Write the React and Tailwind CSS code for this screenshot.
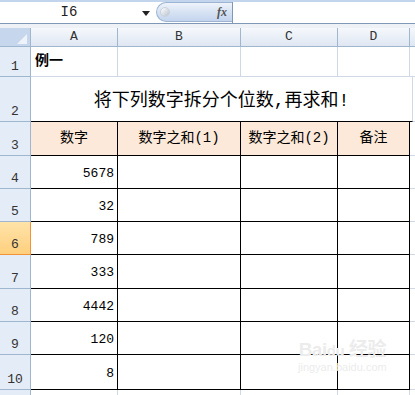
const MONO = { fontFamily: '"Liberation Mono", "Noto Sans CJK SC", monospace' };

const cols = [
  { key: "A", w: "w-[87px]" },
  { key: "B", w: "w-[123px]" },
  { key: "C", w: "w-[97px]" },
  { key: "D", w: "w-[72px]" },
];

const data = [
  { n: 4, h: "h-[33px]", v: "5678" },
  { n: 5, h: "h-[33px]", v: "32" },
  { n: 6, h: "h-[33px]", v: "789", active: true },
  { n: 7, h: "h-[34px]", v: "333" },
  { n: 8, h: "h-[33px]", v: "4442" },
  { n: 9, h: "h-[33px]", v: "120" },
  { n: 10, h: "h-[35px]", v: "8" },
];

const RowHead = ({ n, active }) => (
  <div
    className={
      "w-[31px] shrink-0 flex items-end justify-center pb-[1px] text-[13px] leading-none border-r border-b " +
      (active
        ? "bg-gradient-to-b from-[#ffe3a8] to-[#ffcf7e] border-[#f29436] text-[#333]"
        : "bg-[#e4ecf7] border-[#9eb6ce] text-[#333]")
    }
  >
    <span className="mb-[2px]">{n}</span>
  </div>
);

const FormulaBar = () => (
  <div className="h-[28px] bg-[#eef2f7]">
    <div className="h-[24px] flex border-t-2 border-t-[#c3d5ec] border-b border-b-[#7f98b8] bg-white">
      <div className="w-[156px] shrink-0 flex items-center relative">
        <span className="w-[138px] text-center text-[14px] text-[#222]">I6</span>
        <svg width="8" height="5" className="absolute left-[142px] top-[9px]">
          <path d="M0 0 L8 0 L4 5 Z" fill="#222" />
        </svg>
      </div>
      <div className="w-[76px] shrink-0 h-[20px] rounded-l-full bg-gradient-to-b from-[#eef3fa] via-[#d7e3f3] to-[#c3d5ee] border border-r-0 border-[#9db3d2] flex items-center justify-between pl-[3px] pr-[5px]">
        <div className="w-[10px] h-[10px] rounded-full bg-gradient-to-br from-white to-[#b9c3cf] border border-[#c9d2dd]" />
        <span
          className="text-[12px] italic font-bold text-[#555]"
          style={{ fontFamily: '"Liberation Serif", serif' }}
        >
          fx
        </span>
      </div>
      <div className="flex-1 border-l border-[#7f98b8] bg-white" />
    </div>
  </div>
);

const ColHeader = () => (
  <div className="flex h-[19px] bg-gradient-to-b from-[#f5f8fc] to-[#dfe7f2] border-b border-[#9eb6ce] text-[13px] text-[#333]">
    <div className="w-[31px] shrink-0 bg-[#c5d6ed] border-r border-[#9eb6ce] flex items-end justify-end pr-[3px] pb-[2px]">
      <svg width="10" height="10">
        <path d="M10 0 L10 10 L0 10 Z" fill="#eef3f9" />
      </svg>
    </div>
    {cols.map((c) => (
      <div key={c.key} className={c.w + " shrink-0 border-r border-[#9eb6ce] flex items-center justify-center"}>
        {c.key}
      </div>
    ))}
    <div className="flex-1" />
  </div>
);

export default function App() {
  return (
    <div className="w-[415px] h-[395px] overflow-hidden bg-white relative" style={MONO}>
      <FormulaBar />
      <ColHeader />

      {/* row 1 */}
      <div className="flex h-[30px]">
        <RowHead n={1} />
        {cols.map((c, i) => (
          <div key={c.key} className={c.w + " shrink-0 border-r border-b border-[#d0d7e5] flex items-center pl-[4px]"}>
            {i === 0 && <span className="text-[14px] font-bold text-black">例一</span>}
          </div>
        ))}
        <div className="flex-1 border-b border-[#d0d7e5]" />
      </div>

      {/* row 2 */}
      <div className="flex h-[45px]">
        <RowHead n={2} />
        <div className="w-[382px] shrink-0 border-b border-r border-b-black border-r-[#d0d7e5] flex items-end justify-center pb-[11px]">
          <span className="text-[18px] leading-none text-black">将下列数字拆分个位数,再求和!</span>
        </div>
        <div className="flex-1 border-b border-[#d0d7e5]" />
      </div>

      {/* row 3 */}
      <div className="flex h-[34px]">
        <RowHead n={3} />
        {["数字", "数字之和(1)", "数字之和(2)", "备注"].map((t, i) => (
          <div
            key={t}
            className={cols[i].w + " shrink-0 bg-[#fde9d9] border-r border-b border-black flex items-center justify-center text-[14px] text-black"}
          >
            {t}
          </div>
        ))}
        <div className="flex-1 border-b border-[#d0d7e5]" />
      </div>

      {data.map((r) => (
        <div key={r.n} className={"flex " + r.h}>
          <RowHead n={r.n} active={r.active} />
          {cols.map((c, i) => (
            <div
              key={c.key}
              className={c.w + " shrink-0 border-r border-b border-black flex items-center justify-end pr-[3px] pt-[3px] text-[13px] text-black"}
            >
              {i === 0 ? r.v : ""}
            </div>
          ))}
          <div className="flex-1 border-b border-[#d0d7e5]" />
        </div>
      ))}

      {/* row 11 */}
      <div className="flex h-[10px]">
        <div className="w-[31px] shrink-0 bg-[#e4ecf7] border-r border-[#9eb6ce]" />
        {cols.map((c) => (
          <div key={c.key} className={c.w + " shrink-0 border-r border-[#d0d7e5]"} />
        ))}
      </div>

      {/* watermark */}
      <div className="absolute left-[298px] top-[340px] flex flex-col items-center text-[#ececec] leading-none pointer-events-none" style={{ fontFamily: '"Liberation Sans", "Noto Sans CJK SC", sans-serif' }}>
        <span className="text-[19px] font-bold tracking-tight">Bai<span className="text-[15px]">du</span> 经验</span>
        <span className="text-[11px] mt-[3px]">jingyan.baidu.com</span>
      </div>
    </div>
  );
}
